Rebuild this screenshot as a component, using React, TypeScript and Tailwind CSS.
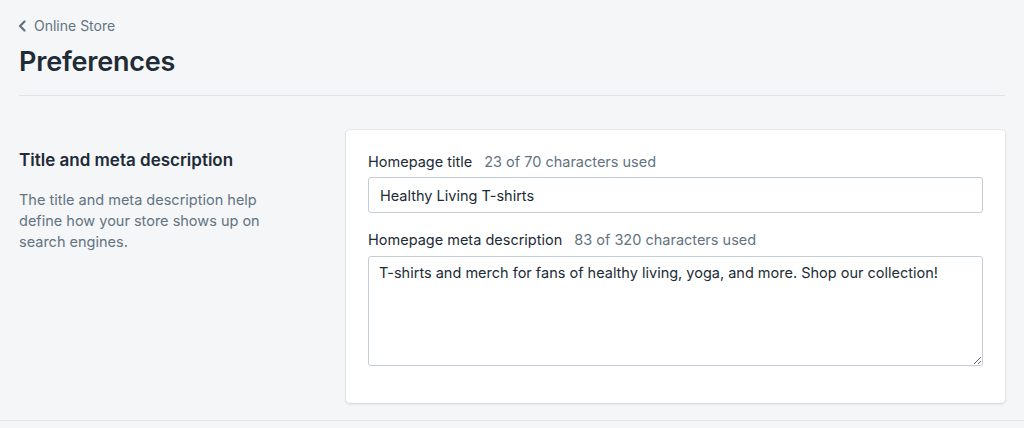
const fields = [
	{ id: 'title', label: 'Homepage title', count: '23 of 70 characters used', value: 'Healthy Living T-shirts', multiline: false },
	{
		id: 'meta',
		label: 'Homepage meta description',
		count: '83 of 320 characters used',
		value: 'T-shirts and merch for fans of healthy living, yoga, and more. Shop our collection!',
		multiline: true,
	},
];

export default function App() {
	return (
		<div className="min-h-screen bg-[#f4f6f8] text-[#212b36] font-['Inter',sans-serif]">
			<div className="px-[19px]">
				<header className="pt-[16px] pb-[17px] border-b border-[#dfe3e8]">
					<a className="flex items-center gap-[8px] text-[14px] leading-[20px] text-[#637381]">
						<svg width="8" height="12" viewBox="0 0 8 12" className="-ml-[1px]">
							<path d="M6.5 1.5 2 6l4.5 4.5" fill="none" stroke="#637381" strokeWidth="2.2" strokeLinecap="round" strokeLinejoin="round" />
						</svg>
						Online Store
					</a>
					<h1 className="mt-[10px] text-[27px] leading-[32px] font-semibold tracking-[-0.2px]">Preferences</h1>
				</header>

				<section className="flex pt-[34px] pb-[17px]">
					<div className="w-[327px] shrink-0 pt-[18px]">
						<h2 className="text-[17px] leading-[24px] font-semibold">Title and meta description</h2>
						<p className="mt-[17px] w-[248px] text-[14.5px] leading-[21px] text-[#637381]">
							The title and meta description help define how your store shows up on search engines.
						</p>
					</div>

					<div className="flex-1 bg-white rounded-[4px] shadow-[0_0_0_1px_rgba(63,63,68,0.05),0_1px_3px_0_rgba(63,63,68,0.15)] px-[22px] pt-[22px] pb-[37px]">
						{fields.map((f, i) => (
							<div key={f.id} className={i > 0 ? 'mt-[17px]' : ''}>
								<label className="flex gap-[12px] text-[14.5px] leading-[20px]">
									<span>{f.label}</span>
									<span className="text-[#637381]">{f.count}</span>
								</label>
								{f.multiline ? (
									<textarea
										defaultValue={f.value}
										className="mt-[6px] block w-full h-[110px] rounded-[3px] border border-[#c4cdd5] bg-white px-[10px] py-[6px] text-[14.5px] leading-[20px] text-[#212b36] outline-none resize-y"
									/>
								) : (
									<input
										defaultValue={f.value}
										className="mt-[5px] block w-full h-[36px] rounded-[3px] border border-[#c4cdd5] bg-white px-[11px] text-[14.5px] text-[#212b36] outline-none"
									/>
								)}
							</div>
						))}
					</div>
				</section>
			</div>
			<div className="border-t border-[#e3e6e9]" />
		</div>
	);
}
